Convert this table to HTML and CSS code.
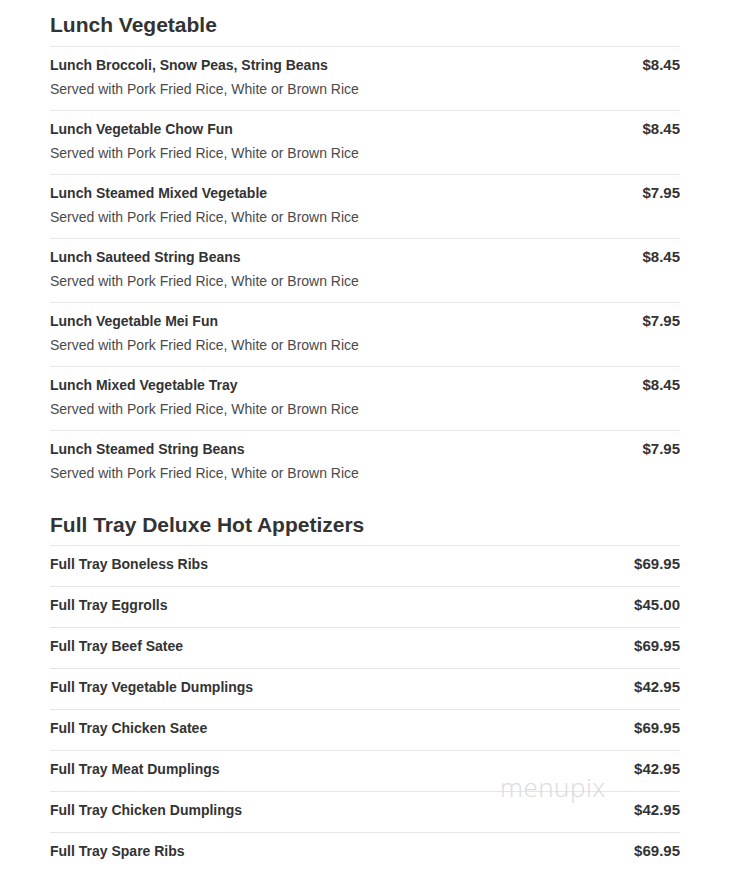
FILE: index.html
```html
<!DOCTYPE html>
<html>
<head>
<meta charset="utf-8">
<link rel="stylesheet" href="styles.css">
</head>
<body>
<div class="menu">
  <section class="section">
    <h2 class="section-title">Lunch Vegetable</h2>
    <div class="item item-desc">
      <div class="item-text"><div class="item-name">Lunch Broccoli, Snow Peas, String Beans</div><div class="item-description">Served with Pork Fried Rice, White or Brown Rice</div></div>
      <div class="item-price">$8.45</div>
    </div>
    <div class="item item-desc">
      <div class="item-text"><div class="item-name">Lunch Vegetable Chow Fun</div><div class="item-description">Served with Pork Fried Rice, White or Brown Rice</div></div>
      <div class="item-price">$8.45</div>
    </div>
    <div class="item item-desc">
      <div class="item-text"><div class="item-name">Lunch Steamed Mixed Vegetable</div><div class="item-description">Served with Pork Fried Rice, White or Brown Rice</div></div>
      <div class="item-price">$7.95</div>
    </div>
    <div class="item item-desc">
      <div class="item-text"><div class="item-name">Lunch Sauteed String Beans</div><div class="item-description">Served with Pork Fried Rice, White or Brown Rice</div></div>
      <div class="item-price">$8.45</div>
    </div>
    <div class="item item-desc">
      <div class="item-text"><div class="item-name">Lunch Vegetable Mei Fun</div><div class="item-description">Served with Pork Fried Rice, White or Brown Rice</div></div>
      <div class="item-price">$7.95</div>
    </div>
    <div class="item item-desc">
      <div class="item-text"><div class="item-name">Lunch Mixed Vegetable Tray</div><div class="item-description">Served with Pork Fried Rice, White or Brown Rice</div></div>
      <div class="item-price">$8.45</div>
    </div>
    <div class="item item-desc">
      <div class="item-text"><div class="item-name">Lunch Steamed String Beans</div><div class="item-description">Served with Pork Fried Rice, White or Brown Rice</div></div>
      <div class="item-price">$7.95</div>
    </div>
  </section>
  <section class="section section-second">
    <h2 class="section-title">Full Tray Deluxe Hot Appetizers</h2>
    <div class="item"><div class="item-text"><div class="item-name">Full Tray Boneless Ribs</div></div><div class="item-price">$69.95</div></div>
    <div class="item"><div class="item-text"><div class="item-name">Full Tray Eggrolls</div></div><div class="item-price">$45.00</div></div>
    <div class="item"><div class="item-text"><div class="item-name">Full Tray Beef Satee</div></div><div class="item-price">$69.95</div></div>
    <div class="item"><div class="item-text"><div class="item-name">Full Tray Vegetable Dumplings</div></div><div class="item-price">$42.95</div></div>
    <div class="item"><div class="item-text"><div class="item-name">Full Tray Chicken Satee</div></div><div class="item-price">$69.95</div></div>
    <div class="item"><div class="item-text"><div class="item-name">Full Tray Meat Dumplings</div></div><div class="item-price">$42.95</div></div>
    <div class="item"><div class="item-text"><div class="item-name">Full Tray Chicken Dumplings</div></div><div class="item-price">$42.95</div></div>
    <div class="item"><div class="item-text"><div class="item-name">Full Tray Spare Ribs</div></div><div class="item-price">$69.95</div></div>
  </section>
</div>
<div class="watermark">menupix</div>
</body>
</html>
```
FILE: styles.css
```css
html, body {
  margin: 0;
  padding: 0;
  background: #ffffff;
}
body {
  font-family: "Liberation Sans", Arial, sans-serif;
  color: #333333;
  position: relative;
  width: 733px;
  height: 870px;
  overflow: hidden;
}
.menu {
  width: 630px;
  margin-left: 50px;
  padding-top: 9px;
}
.section-title {
  margin: 0 0 6px 0;
  font-size: 21px;
  line-height: 31px;
  font-weight: bold;
  color: #333333;
}
.section-second {
  margin-top: 15px;
}
.section-second .section-title {
  margin-bottom: 5px;
}
.item {
  display: flex;
  justify-content: space-between;
  align-items: flex-start;
  border-top: 1px solid #e6e6e6;
  padding: 6px 0 10px 0;
}
.item-desc {
  padding-bottom: 9px;
}
.item-name {
  font-size: 14px;
  line-height: 24px;
  font-weight: bold;
  color: #333333;
}
.item-description {
  font-size: 14px;
  line-height: 24px;
  color: #4a4a4a;
}
.item-price {
  font-size: 15px;
  line-height: 24px;
  font-weight: bold;
  color: #333333;
}
.watermark {
  position: absolute;
  left: 500px;
  top: 771px;
  font-family: "Open Sans", sans-serif;
  font-weight: 300;
  font-size: 26px;
  line-height: 32px;
  color: #dcdcdc;
  letter-spacing: 0.5px;
}
```
